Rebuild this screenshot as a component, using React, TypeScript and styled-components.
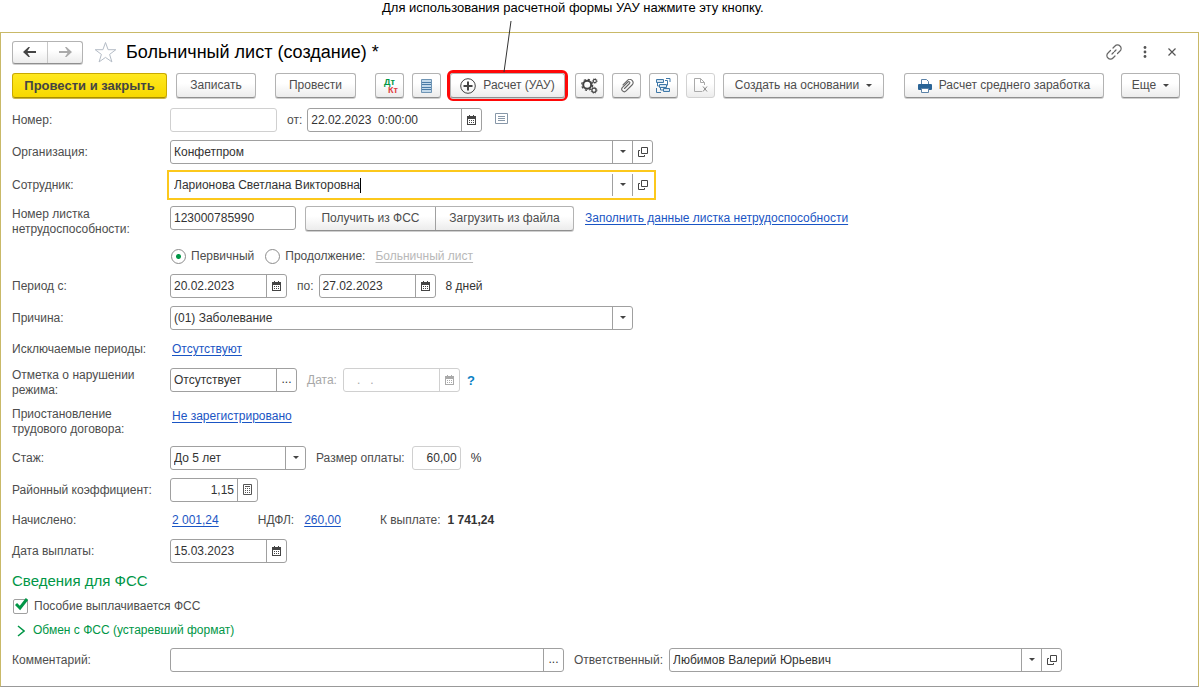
import React from "react";
import styled, { createGlobalStyle, css } from "styled-components";

const ink = "#333333";
const labelInk = "#4d4d4d";
const dimInk = "#a8a8a8";
const line = "#a0a0a0";
const green = "#009646";
const linkBlue = "#1a55c4";

const GlobalStyle = createGlobalStyle`
  * { box-sizing: border-box; }
  body {
    margin: 0;
    background: #fff;
    color: ${labelInk};
    font: 12px/15px "Liberation Sans", Arial, sans-serif;
  }
  button, input, select { font: inherit; color: inherit; margin: 0; }
`;

const Page = styled.div`
  display: flex;
  flex-direction: column;
  min-height: 100vh;
`;

const Callout = styled.p`
  margin: 0;
  padding: 0 0 0 382px;
  height: 32px;
  color: #000;
  font-size: 13px;
  white-space: nowrap;
`;

const Frame = styled.main`
  flex: 1;
  display: flex;
  flex-direction: column;
  border: 1px solid #c9b968;
  border-bottom-color: #999;
  padding: 7px 19px 12px 11px;
`;

const TitleBar = styled.header`
  display: flex;
  align-items: center;
  height: 24px;
  margin-bottom: 9px;
`;

const raised = css`
  border: 1px solid #b3b3b3;
  border-bottom-color: #8f8f8f;
  border-radius: 3px;
  background: linear-gradient(#fff 40%, #ececec);
  box-shadow: 0 1px 0 #cfcfcf;
`;

const NavGroup = styled.nav`
  ${raised}
  display: flex;
  width: 71px;
  height: 23px;
`;

const NavButton = styled.button`
  flex: 1;
  display: flex;
  align-items: center;
  justify-content: center;
  padding: 0;
  border: 0;
  background: none;
  & + & { border-left: 1px solid #c8c8c8; }
`;

const PlainButton = styled.button`
  display: flex;
  align-items: center;
  justify-content: center;
  padding: 0;
  border: 0;
  background: none;
`;

const StarButton = styled(PlainButton)`
  margin: 0 9px 0 11px;
`;

const Title = styled.h1`
  margin: 0;
  color: #000;
  font-size: 18px;
  line-height: 24px;
  font-weight: 400;
`;

const WindowTools = styled.div`
  display: flex;
  align-items: center;
  gap: 21px;
  margin: 0 3px 0 auto;
`;

const Toolbar = styled.div`
  display: flex;
  gap: 8px;
  height: 25px;
  margin-bottom: 10px;
  white-space: nowrap;
`;

const ToolButton = styled.button<{ $w?: number; $before?: number; $primary?: boolean; $faded?: boolean }>`
  ${raised}
  display: flex;
  align-items: center;
  justify-content: center;
  gap: 7px;
  flex: none;
  width: ${(p) => p.$w ?? 29}px;
  height: 25px;
  margin-left: ${(p) => p.$before ?? 0}px;
  padding: 0;
  ${(p) => p.$primary && css`
    background: linear-gradient(#ffe81f, #f7d800);
    border-color: #c9a900;
    border-bottom-color: #a88d00;
    box-shadow: 0 1px 0 #c9b44a;
    font-size: 13px;
    font-weight: 700;
    color: #444;
  `}
  ${(p) => p.$faded && css`
    border-color: #d2d2d2;
    box-shadow: none;
  `}
`;

const Highlight = styled.div`
  position: relative;
  flex: none;
  height: 31px;
  margin: -3px -1px -3px -2px;
  border: 3px solid #ff0808;
  border-radius: 6px;
`;

const Pointer = styled.svg`
  position: absolute;
  left: 50px;
  bottom: 100%;
  pointer-events: none;
`;

const Posting = styled.span`
  display: grid;
  font-size: 9px;
  line-height: 8px;
  font-weight: 700;
  width: 17px;
  color: ${green};
`;

const Credit = styled.span`
  color: #e0393e;
  text-align: right;
`;

const Form = styled.form`
  display: flex;
  flex-direction: column;
  gap: 8px;
`;

const Row = styled.div<{ $h?: number; $top?: boolean }>`
  display: flex;
  align-items: ${(p) => (p.$top ? "flex-start" : "center")};
  min-height: ${(p) => p.$h ?? 24}px;
  white-space: nowrap;
`;

const Label = styled.label`
  flex: none;
  width: 158px;
  align-self: center;
  white-space: pre-line;
`;

const Inline = styled.label<{ $l?: number; $r?: number; $dim?: boolean }>`
  margin: 0 ${(p) => p.$r ?? 5}px 0 ${(p) => p.$l ?? 10}px;
  color: ${(p) => (p.$dim ? dimInk : "inherit")};
`;

const Value = styled.output<{ $l?: number; $bold?: boolean }>`
  margin-left: ${(p) => p.$l ?? 10}px;
  color: ${ink};
  font-weight: ${(p) => (p.$bold ? 700 : 400)};
`;

const Line = styled.div<{ $h?: number }>`
  display: flex;
  align-items: center;
  height: ${(p) => p.$h ?? 24}px;
`;

const Box = styled.div<{ $w: number; $dim?: boolean; $active?: boolean }>`
  display: flex;
  flex: 0 1 ${(p) => p.$w}px;
  width: ${(p) => p.$w}px;
  height: 24px;
  border: 1px solid ${(p) => (p.$dim ? "#d0d0d0" : line)};
  border-radius: 3px;
  background: #fff;
  color: ${ink};
  ${(p) => p.$active && css`
    border-color: #fff;
    border-radius: 0;
    outline: 2px solid #fcc81c;
    outline-offset: 1px;
  `}
`;

const Input = styled.input<{ $right?: boolean; $fit?: boolean }>`
  flex: ${(p) => (p.$fit ? "none" : "1")};
  min-width: 0;
  width: 0;
  padding: 0 3px;
  border: 0;
  background: none;
  outline: none;
  text-align: ${(p) => (p.$right ? "right" : "left")};
  &:disabled { color: ${dimInk}; }
  ${(p) => p.$fit && css`
    width: auto;
    field-sizing: content;
    padding-right: 0;
  `}
`;

const Caret = styled.span`
  width: 1px;
  height: 15px;
  margin: auto auto auto 0;
  background: #000;
`;

const Part = styled.button<{ $dim?: boolean }>`
  display: flex;
  flex: none;
  align-items: center;
  justify-content: center;
  width: 20px;
  padding: 0 0 1px;
  border: 0;
  border-left: 1px solid ${(p) => (p.$dim ? "#d0d0d0" : line)};
  background: none;
`;

const SelectBox = styled(Box)`
  display: grid;
  grid-template-columns: 1fr 20px;
`;

const Select = styled.select`
  grid-area: 1 / 1 / 2 / 3;
  appearance: none;
  padding: 0 24px 0 3px;
  border: 0;
  background: none;
`;

const SelectMark = styled.span`
  grid-area: 1 / 2;
  display: flex;
  align-items: center;
  justify-content: center;
  padding-bottom: 1px;
  border-left: 1px solid ${line};
  pointer-events: none;
`;

const Link = styled.a<{ $l?: number; $dim?: boolean }>`
  margin-left: ${(p) => p.$l ?? 2}px;
  color: ${(p) => (p.$dim ? "#b8b8b8" : linkBlue)};
  text-decoration: underline;
  text-underline-offset: 2px;
`;

const Split = styled.div`
  ${raised}
  display: flex;
  height: 25px;
  margin: 0 11px 0 9px;
`;

const SplitButton = styled.button<{ $w: number }>`
  width: ${(p) => p.$w}px;
  padding: 0;
  border: 0;
  background: none;
  & + & { border-left: 1px solid ${line}; }
`;

const Radio = styled.input`
  appearance: none;
  width: 15px;
  height: 15px;
  margin: 0 5px 0 1px;
  border: 1px solid #8c8c8c;
  border-radius: 50%;
  &:checked { background: radial-gradient(circle, ${green} 2px, #fff 3px); }
`;

const Choice = styled.label`
  display: flex;
  align-items: center;
  margin-right: 10px;
`;

const RadioGroup = styled.div`
  display: flex;
  align-items: center;
  padding-left: 158px;
`;

const Help = styled(PlainButton)`
  margin-left: 7px;
  color: #0a7fc4;
  font-size: 13px;
  font-weight: 700;
`;

const Section = styled.h2`
  margin: 0;
  color: ${green};
  font-size: 15px;
  line-height: 20px;
  font-weight: 400;
`;

const CheckLabel = styled.label`
  display: flex;
  align-items: center;
  gap: 6px;
  height: 14px;
  padding-left: 1px;
`;

const CheckWrap = styled.span`
  position: relative;
  display: flex;
`;

const Check = styled.input`
  appearance: none;
  width: 15px;
  height: 15px;
  border: 1px solid ${line};
  border-radius: 2px;
`;

const Tick = styled.svg`
  position: absolute;
  left: 2px;
  top: -1px;
  pointer-events: none;
`;

const Expander = styled.button`
  display: flex;
  align-items: center;
  align-self: flex-start;
  gap: 8px;
  height: 19px;
  padding: 0 0 0 5px;
  border: 0;
  background: none;
  && { color: ${green}; }
`;

const Down = () => (
  <svg width="6" height="3" viewBox="0 0 6 3"><path d="M0 0h6L3 3z" fill="#444" /></svg>
);

const OpenIcon = () => (
  <svg width="10" height="10" viewBox="0 0 10 10" fill="none" stroke="#444">
    <path d="M3.5.5h6v6h-6zM2 3.500H.5v6h6V8" />
  </svg>
);

const CalendarIcon = ({ dim }: { dim?: boolean }) => (
  <svg width="9" height="10" viewBox="0 0 9 10" fill={dim ? "#aaa" : "#444"}>
    <path fillRule="evenodd" d="M0 1h2V0h1v1h3V0h1v1h2v9H0zM1 4v5h7V4z" />
    <path d="M2 5h1v1H2zM4 5h1v1H4zM6 5h1v1H6zM2 7h1v1H2zM4 7h1v1H4zM6 7h1v1H6z" />
  </svg>
);

const CalcIcon = () => (
  <svg width="9" height="11" viewBox="0 0 9 11">
    <path d="M.5.5h8v10h-8z" fill="none" stroke="#555" />
    <path d="M2 2h5v1H2zM2 4h1v1H2zM4 4h1v1H4zM6 4h1v1H6zM2 6h1v1H2zM4 6h1v1H4zM6 6h1v1H6zM2 8h1v1H2zM4 8h1v1H4zM6 8h1v1H6z" fill="#555" />
  </svg>
);

const ArrowIcon = ({ color, flip }: { color: string; flip?: boolean }) => (
  <svg width="14" height="10" viewBox="0 0 14 10" fill={color}>
    <path d={flip ? "M14 5L8.500 0H7l2.500 4H1v2h8.500L7 10h1.500z" : "M0 5l5.500-5H7L4.500 4H13v2H4.500L7 10H5.500z"} />
  </svg>
);

const StarIcon = () => (
  <svg width="23" height="22" viewBox="0 0 23 22" fill="none" stroke="#b4bcc6">
    <path d="M11.500 1.500l2.600 7.200h7.700l-6.200 4.700 2.300 7.500-6.400-4.500-6.400 4.500 2.300-7.500L1.200 8.700h7.700z" />
  </svg>
);

const LinkIcon = () => (
  <svg width="16" height="16" viewBox="0 0 16 16" fill="none" stroke="#666" strokeWidth="1.200" strokeLinecap="round">
    <path d="M7 4l2-2a3.300 3.300 0 0 1 5 0 3.300 3.300 0 0 1 0 5l-2.500 2.500M9 12l-2 2a3.300 3.300 0 0 1-5 0 3.300 3.300 0 0 1 0-5l2.500-2.500M6 10l1.500-1.500M8.500 7.500L10 6" />
  </svg>
);

const MoreIcon = () => (
  <svg width="4" height="12" viewBox="0 0 4 12" fill="#555">
    <circle cx="2" cy="1.500" r="1.400" /><circle cx="2" cy="6" r="1.400" /><circle cx="2" cy="10.500" r="1.400" />
  </svg>
);

const CloseIcon = () => (
  <svg width="8" height="8" viewBox="0 0 8 8" stroke="#555" strokeWidth="1.200"><path d="M.5.5l7 7M7.500.5l-7 7" /></svg>
);

const RegisterIcon = () => (
  <svg width="11" height="14" viewBox="0 0 11 14">
    <path d="M.5.5h10v13H.5z" fill="#c3d9ea" stroke="#6f95b5" />
    <path d="M1 3.500h9M1 5.500h9M1 8.500h9M1 10.500h9" stroke="#4a7ba6" />
  </svg>
);

const PlusIcon = () => (
  <svg width="16" height="16" viewBox="0 0 16 16" fill="none" stroke="#444">
    <circle cx="8" cy="8" r="7.300" /><path d="M8 3.500v9M3.500 8h9" strokeWidth="2" />
  </svg>
);

const GearsIcon = () => (
  <svg width="17" height="16" viewBox="0 0 17 16" fill="none" stroke="#444">
    <circle cx="6.200" cy="6.800" r="4" strokeWidth="2" />
    <circle cx="6.200" cy="6.800" r="5.500" strokeWidth="1.200" strokeDasharray="2.200 2.120" />
    <circle cx="13.800" cy="3" r="1.600" strokeWidth="1.100" />
    <circle cx="13.800" cy="3" r="2.500" strokeWidth=".6" strokeDasharray="1 .96" />
    <circle cx="13" cy="12.200" r="2.100" strokeWidth="1.300" />
    <circle cx="13" cy="12.200" r="3" strokeWidth=".8" strokeDasharray="1.200 1.156" />
  </svg>
);

const ClipIcon = () => (
  <svg width="14" height="14" viewBox="0 0 14 14" fill="none" stroke="#666" strokeWidth="1.100" strokeLinecap="round">
    <path d="M4.500 9.500l5-5a1 1 0 0 0-1.600-1.500L2.500 8.400a2.500 2.500 0 0 0 3.600 3.500L12 6a3.200 3.200 0 0 0-4.500-4.600L3 5.800" />
  </svg>
);

const StructureIcon = () => (
  <svg width="15" height="15" viewBox="0 0 15 15" fill="none" stroke="#3f78a8">
    <path d="M.5 1.500h7v3h-7zM3.500 6.500h7v3h-7zM7.500 10.500h6v3h-6z" fill="#d5e5f2" />
    <path d="M1.500 4.500v3.500h2M9 2.500h2.500v5M4.500 9.500V12H7M10 .5h4V4M.5 10v4.500H5" />
  </svg>
);

const RemoveDocIcon = () => (
  <svg width="14" height="15" viewBox="0 0 14 15" fill="none" stroke="#aaa">
    <path d="M10.500 7V4.500L6.500.5H.5v13H8M6.500.5v4h4" />
    <path d="M9 8.500l4 5M13 8.500l-4 5" stroke="#888" />
  </svg>
);

const PrintIcon = () => (
  <svg width="14" height="14" viewBox="0 0 14 14">
    <path d="M3.500 6V.5h5l2 2V6" fill="#fff" stroke="#5c83a8" />
    <path d="M1 5h12a1 1 0 0 1 1 1v4a1 1 0 0 1-1 1H1a1 1 0 0 1-1-1V6a1 1 0 0 1 1-1z" fill="#2a6496" />
    <path d="M3.500 9.500h7v4h-7z" fill="#fff" stroke="#5c83a8" />
  </svg>
);

const NoteIcon = () => (
  <svg width="13" height="11" viewBox="0 0 13 11" fill="none" stroke="#8797a8">
    <path d="M.5.5h12v10H.5zM3 3.500h7M3 5.500h7M3 7.500h7" />
  </svg>
);

const DateField = ({ id, value, width = 117, dim }: { id: string; value: string; width?: number; dim?: boolean }) => (
  <Box $w={width} $dim={dim}>
    <Input id={id} defaultValue={value} disabled={dim} />
    <Part type="button" $dim={dim} disabled={dim} aria-label="Календарь"><CalendarIcon dim={dim} /></Part>
  </Box>
);

const PickField = ({ id, value, width, active }: { id: string; value: string; width: number; active?: boolean }) => (
  <Box $w={width} $active={active}>
    <Input id={id} defaultValue={value} $fit={active} />
    {active && <Caret />}
    <Part type="button" aria-label="Выбрать"><Down /></Part>
    <Part type="button" aria-label="Открыть"><OpenIcon /></Part>
  </Box>
);

const ChoiceField = ({ id, value, width }: { id: string; value: string; width: number }) => (
  <SelectBox $w={width}>
    <Select id={id} defaultValue={value}><option>{value}</option></Select>
    <SelectMark><Down /></SelectMark>
  </SelectBox>
);

export default function App() {
  return (
    <Page>
      <GlobalStyle />
      <Callout>Для использования расчетной формы УАУ нажмите эту кнопку.</Callout>
      <Frame>
        <TitleBar>
          <NavGroup>
            <NavButton aria-label="Назад"><ArrowIcon color="#444" /></NavButton>
            <NavButton aria-label="Вперед"><ArrowIcon color="#aaa" flip /></NavButton>
          </NavGroup>
          <StarButton aria-label="В избранное"><StarIcon /></StarButton>
          <Title>Больничный лист (создание) *</Title>
          <WindowTools>
            <PlainButton aria-label="Ссылка"><LinkIcon /></PlainButton>
            <PlainButton aria-label="Меню"><MoreIcon /></PlainButton>
            <PlainButton aria-label="Закрыть"><CloseIcon /></PlainButton>
          </WindowTools>
        </TitleBar>

        <Toolbar>
          <ToolButton $w={155} $primary>Провести и закрыть</ToolButton>
          <ToolButton $w={80} $before={1}>Записать</ToolButton>
          <ToolButton $w={81} $before={11}>Провести</ToolButton>
          <ToolButton $before={11} aria-label="Движения документа">
            <Posting>Дт<Credit>Кт</Credit></Posting>
          </ToolButton>
          <ToolButton aria-label="Реестр"><RegisterIcon /></ToolButton>
          <Highlight>
            <ToolButton $w={115}><PlusIcon />Расчет (УАУ)</ToolButton>
            <Pointer width="14" height="52" viewBox="0 0 14 52" stroke="#333"><path d="M11 0L4 51" /></Pointer>
          </Highlight>
          <ToolButton aria-label="Настройки"><GearsIcon /></ToolButton>
          <ToolButton aria-label="Файлы"><ClipIcon /></ToolButton>
          <ToolButton aria-label="Структура подчиненности"><StructureIcon /></ToolButton>
          <ToolButton $faded aria-label="Удалить"><RemoveDocIcon /></ToolButton>
          <ToolButton $w={161}>Создать на основании<Down /></ToolButton>
          <ToolButton $w={200} $before={12}><PrintIcon />Расчет среднего заработка</ToolButton>
          <ToolButton $w={59} $before={9}>Еще<Down /></ToolButton>
        </Toolbar>

        <Form onSubmit={(e) => e.preventDefault()}>
          <Row>
            <Label htmlFor="number">Номер:</Label>
            <Box $w={107} $dim><Input id="number" /></Box>
            <Inline htmlFor="created">от:</Inline>
            <DateField id="created" value="22.02.2023  0:00:00" width={175} />
            <Inline as="span" $l={13}><NoteIcon /></Inline>
          </Row>
          <Row>
            <Label htmlFor="org">Организация:</Label>
            <PickField id="org" value="Конфетпром" width={483} />
          </Row>
          <Row $h={26}>
            <Label htmlFor="employee">Сотрудник:</Label>
            <PickField id="employee" value="Ларионова Светлана Викторовна" width={483} active />
          </Row>
          <Row $h={32} $top>
            <Label htmlFor="sheet">{"Номер листка\nнетрудоспособности:"}</Label>
            <Box $w={126}><Input id="sheet" defaultValue="123000785990" /></Box>
            <Split>
              <SplitButton type="button" $w={129}>Получить из ФСС</SplitButton>
              <SplitButton type="button" $w={138}>Загрузить из файла</SplitButton>
            </Split>
            <Line><Link href="#fill" $l={0}>Заполнить данные листка нетрудоспособности</Link></Line>
          </Row>
          <Row $h={20}>
            <RadioGroup role="radiogroup">
              <Choice><Radio type="radio" name="kind" defaultChecked />Первичный</Choice>
              <Choice><Radio type="radio" name="kind" />Продолжение:</Choice>
            </RadioGroup>
            <Link href="#previous" $l={0} $dim>Больничный лист</Link>
          </Row>
          <Row>
            <Label htmlFor="from">Период с:</Label>
            <DateField id="from" value="20.02.2023" />
            <Inline htmlFor="to">по:</Inline>
            <DateField id="to" value="27.02.2023" />
            <Value>8 дней</Value>
          </Row>
          <Row>
            <Label htmlFor="reason">Причина:</Label>
            <ChoiceField id="reason" value="(01) Заболевание" width={463} />
          </Row>
          <Row $h={22}>
            <Label as="span">Исключаемые периоды:</Label>
            <Link href="#excluded">Отсутствуют</Link>
          </Row>
          <Row $h={30} $top>
            <Label htmlFor="violation">{"Отметка о нарушении\nрежима:"}</Label>
            <Box $w={127}>
              <Input id="violation" defaultValue="Отсутствует" />
              <Part type="button">...</Part>
            </Box>
            <Line><Inline htmlFor="violationDate" $r={6} $dim>Дата:</Inline></Line>
            <DateField id="violationDate" value="   .   ." dim />
            <Line><Help type="button">?</Help></Line>
          </Row>
          <Row $h={32} $top>
            <Label as="span">{"Приостановление\nтрудового договора:"}</Label>
            <Line $h={20}><Link href="#suspension">Не зарегистрировано</Link></Line>
          </Row>
          <Row>
            <Label htmlFor="seniority">Стаж:</Label>
            <ChoiceField id="seniority" value="До 5 лет" width={136} />
            <Inline htmlFor="rate" $r={7}>Размер оплаты:</Inline>
            <Box $w={49} $dim><Input id="rate" defaultValue="60,00" $right /></Box>
            <Value>%</Value>
          </Row>
          <Row>
            <Label htmlFor="factor">Районный коэффициент:</Label>
            <Box $w={88}>
              <Input id="factor" defaultValue="1,15" $right />
              <Part type="button" aria-label="Калькулятор"><CalcIcon /></Part>
            </Box>
          </Row>
          <Row $h={21}>
            <Label as="span">Начислено:</Label>
            <Link href="#accrued">2 001,24</Link>
            <Inline as="span" $l={39} $r={10}>НДФЛ:</Inline>
            <Link href="#tax" $l={0}>260,00</Link>
            <Inline as="span" $l={39} $r={7}>К выплате:</Inline>
            <Value $l={0} $bold>1 741,24</Value>
          </Row>
          <Row>
            <Label htmlFor="payday">Дата выплаты:</Label>
            <DateField id="payday" value="15.03.2023" />
          </Row>
          <Section>Сведения для ФСС</Section>
          <CheckLabel>
            <CheckWrap>
              <Check type="checkbox" defaultChecked />
              <Tick width="13" height="13" viewBox="0 0 13 13" fill="none" stroke={green} strokeWidth="3"><path d="M1 6l4 4 7-9" /></Tick>
            </CheckWrap>
            Пособие выплачивается ФСС
          </CheckLabel>
          <Expander type="button">
            <svg width="8" height="12" viewBox="0 0 8 12" fill="none" stroke={green} strokeWidth="1.500"><path d="M1 1l6 5-6 5" /></svg>
            Обмен с ФСС (устаревший формат)
          </Expander>
          <Row>
            <Label htmlFor="comment">Комментарий:</Label>
            <Box $w={394}>
              <Input id="comment" />
              <Part type="button">...</Part>
            </Box>
            <Inline htmlFor="responsible" $r={6}>Ответственный:</Inline>
            <PickField id="responsible" value="Любимов Валерий Юрьевич" width={393} />
          </Row>
        </Form>
      </Frame>
    </Page>
  );
}
